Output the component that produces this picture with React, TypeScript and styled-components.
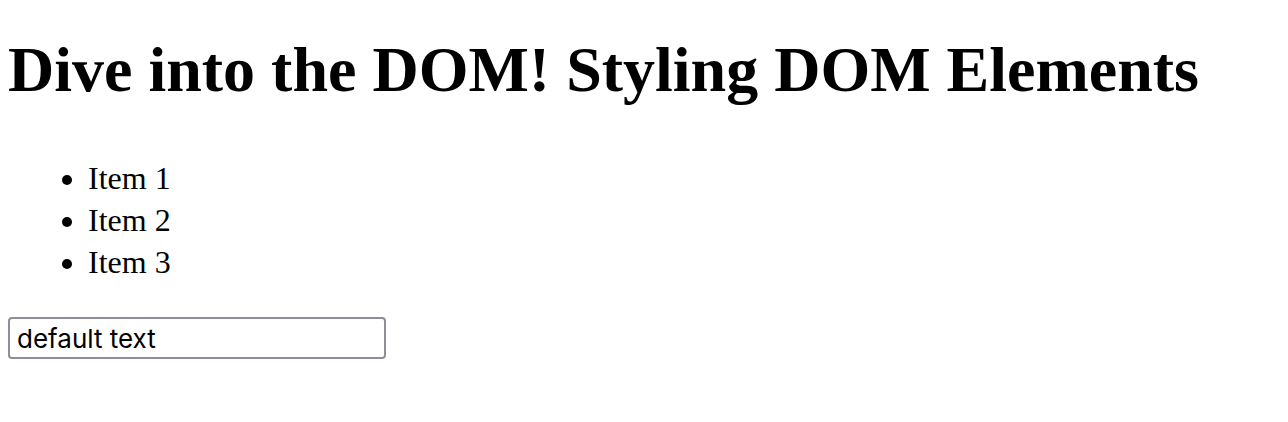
import React from "react";
import styled, { createGlobalStyle } from "styled-components";

const GlobalStyle = createGlobalStyle`
  body {
    margin: 8px;
    background: #ffffff;
    color: #000000;
    font-family: "Liberation Serif", "Times New Roman", serif;
  }
`;

const Page = styled.div`
  display: flex;
  flex-direction: column;
  align-items: flex-start;
`;

const Title = styled.h1`
  font-size: 64px;
  font-weight: bold;
  margin: 26px 0 0 0;
  line-height: 71px;
`;

const List = styled.ul`
  margin: 52px 0 0 0;
  padding-left: 80px;
  font-size: 32px;
  list-style: disc;
`;

const Item = styled.li`
  line-height: 42px;
`;

const TextInput = styled.input`
  box-sizing: border-box;
  margin-top: 34px;
  width: 378px;
  height: 42px;
  border: 2px solid #8e8e98;
  border-radius: 4px;
  padding: 0 7px;
  font-family: Inter, "Noto Sans", sans-serif;
  font-size: 26px;
  color: #000;
  background: #fff;
  outline: none;
`;

export default function App() {
  return (
    <>
      <GlobalStyle />
      <Page>
        <Title>Dive into the DOM! Styling DOM Elements</Title>
        <List>
          <Item>Item 1</Item>
          <Item>Item 2</Item>
          <Item>Item 3</Item>
        </List>
        <TextInput type="text" defaultValue="default text" />
      </Page>
    </>
  );
}
